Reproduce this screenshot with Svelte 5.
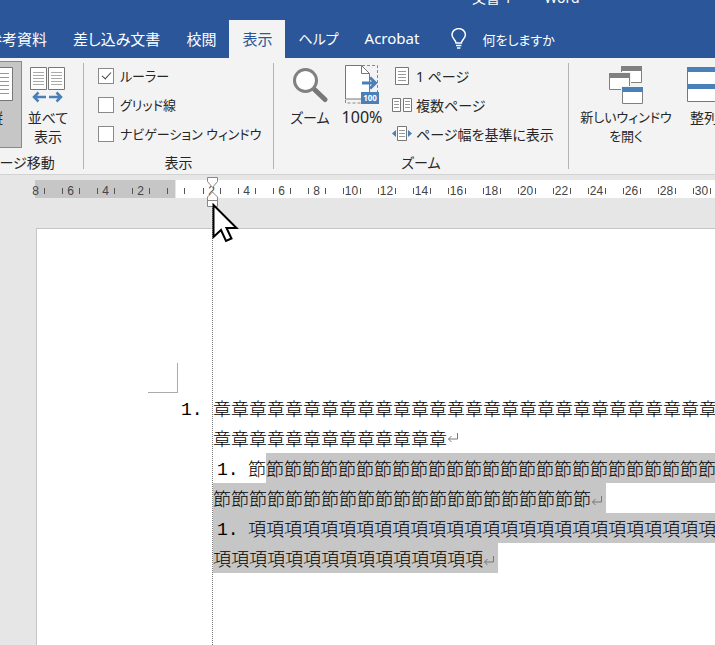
<script>
  const tabs = ['参考資料', '差し込み文書', '校閲', '表示', 'ヘルプ', 'Acrobat'];
  let current = '表示';

  let options = [
    { label: 'ルーラー', checked: true },
    { label: 'グリッド線', checked: false },
    { label: 'ナビゲーション ウィンドウ', checked: false }
  ];

  const before = [8, 6, 4, 2];
  const after = Array.from({ length: 15 }, (_, i) => (i + 1) * 2);
</script>

{#snippet mark()}
  <svg class="mark" width="12" height="12" viewBox="0 0 12 12">
    <path d="M10.500 1v6H1.500M4.500 4l-3 3 3 3" fill="none" stroke="#777" />
  </svg>
{/snippet}

<div class="app">
  <header>
    <div class="title"><span>文書 1</span><span>-</span><span>Word</span></div>
    <nav>
      {#each tabs as tab}
        <button class="tab" class:kana={tab === 'ヘルプ'} class:active={tab === current} on:click={() => (current = tab)}>{tab}</button>
      {/each}
      <button class="tell">
        <svg width="18" height="22" viewBox="0 0 18 22" fill="none" stroke="#fff" stroke-width="1.5">
          <path d="M6 15c0-3-4-4.200-4-8.200a6.700 6.200 0 0 1 13.400 0c0 4-4 5.200-4 8.200z" />
          <path d="M6 17.500h5.400M7 20h3.400" />
        </svg>
        何をしますか
      </button>
    </nav>
  </header>

  <div class="ribbon">
    <section class="group move">
      <div class="tools">
        <button class="big pressed">
          <svg width="34" height="40" viewBox="0 0 34 40">
            <path d="M.5 2.500h33v33H.5z" fill="#fff" stroke="#777" />
            <path d="M4 8.500h26M4 12.500h26M4 16.500h26M4 20.500h26M4 24.500h26M4 28.500h26" stroke="#999" />
          </svg>
          <span>縦</span>
        </button>
        <button class="big side">
          <svg width="36" height="40" viewBox="0 0 36 40">
            <path d="M.5 2.500h16v22H.5zM18.500 2.500h16v22h-16z" fill="#fff" stroke="#777" />
            <path d="M3 7.500h11M3 10.500h11M3 13.500h11M3 16.500h11M3 19.500h11M21 7.500h11M21 10.500h11M21 13.500h11M21 16.500h11M21 19.500h11" stroke="#aaa" />
            <path d="M16 32H4M8.500 27.500L4 32l4.500 4.500M19 32h12M26.500 27.500L31 32l-4.500 4.500" fill="none" stroke="#4a80b8" stroke-width="2.500" />
          </svg>
          <span>並べて<br />表示</span>
        </button>
      </div>
      <h2>ページ移動</h2>
    </section>

    <section class="group show">
      <div class="tools rows">
        {#each options as option}
          <label><input type="checkbox" bind:checked={option.checked} />{option.label}</label>
        {/each}
      </div>
      <h2>表示</h2>
    </section>

    <section class="group zoom">
      <div class="tools">
        <button class="big">
          <svg width="36" height="40" viewBox="0 0 36 40">
            <path d="M22.500 24.500L33 34.500" stroke="#777" stroke-width="5" stroke-linecap="round" />
            <circle cx="13.500" cy="15.500" r="11" fill="#fff" stroke="#808080" stroke-width="3" />
          </svg>
          <span>ズーム</span>
        </button>
        <button class="big percent">
          <svg width="34" height="40" viewBox="0 0 34 40">
            <path d="M17 .5h15.500v37.500H.5V34" fill="none" stroke="#888" stroke-dasharray="3 2" />
            <path d="M.5.5h16l8 8v25.500H.5z" fill="#fff" stroke="#777" />
            <path d="M16.500.5v8h8" fill="none" stroke="#777" />
            <path d="M17 18h13M25 12.500l5.500 5.500-5.500 5.500" fill="none" stroke="#4a80b8" stroke-width="3" />
            <path d="M16 27h18v12H16z" fill="#4a80b8" />
            <text x="25" y="36" text-anchor="middle" fill="#fff">100</text>
          </svg>
          <span>100%</span>
        </button>
        <div class="rows">
          <button class="small">
            <svg width="20" height="20" viewBox="0 0 20 20">
              <path d="M3.500 1.500h13v17h-13z" fill="#fff" stroke="#777" />
              <path d="M6 5.500h8M6 8.500h8M6 11.500h8M6 14.500h8" stroke="#999" />
            </svg>
            1 ページ
          </button>
          <button class="small">
            <svg width="20" height="20" viewBox="0 0 20 20">
              <path d="M.5 3.500h8v13h-8zM11.500 3.500h8v13h-8z" fill="#fff" stroke="#777" />
              <path d="M2 6.500h5M2 9.500h5M2 12.500h5M13 6.500h5M13 9.500h5M13 12.500h5" stroke="#999" />
            </svg>
            複数ページ
          </button>
          <button class="small">
            <svg width="20" height="20" viewBox="0 0 20 20">
              <path d="M5.500 2.500h9v14h-9z" fill="#fff" stroke="#777" />
              <path d="M7 6.500h6M7 9.500h6M7 12.500h6" stroke="#999" />
              <path d="M4 6v7L0 9.500zM16 6v7l4-3.500z" fill="#4a80b8" />
            </svg>
            ページ幅を基準に表示
          </button>
        </div>
      </div>
      <h2>ズーム</h2>
    </section>

    <section class="group window">
      <div class="tools">
        <button class="big wide">
          <svg width="36" height="40" viewBox="0 0 36 40">
            <path d="M13.500 1.500h20v16h-20z" fill="#fff" stroke="#808080" />
            <path d="M13 1h21v5H13z" fill="#808080" />
            <path d="M0 7h23v18H0z" fill="#f3f3f3" />
            <path d="M1.500 8.500h20v16h-20z" fill="#fff" stroke="#808080" />
            <path d="M1 8h21v5H1z" fill="#808080" />
            <path d="M13 21h23v18H13z" fill="#f3f3f3" />
            <path d="M14.500 22.500h20v16h-20z" fill="#fff" stroke="#808080" />
            <path d="M14 22h21v5H14z" fill="#4a80b8" />
          </svg>
          <span>新しいウィンドウ<br />を開く</span>
        </button>
        <button class="big">
          <svg width="34" height="40" viewBox="0 0 34 40">
            <path d="M.5 2.500h33v34H.5z" fill="#fff" stroke="#777" />
            <path d="M0 2h34v5H0zM0 19h34v5H0z" fill="#4a80b8" />
          </svg>
          <span>整列</span>
        </button>
      </div>
    </section>
  </div>

  <main>
    <div class="ruler">
      <div class="margin">
        {#each before as n}
          <div class="unit"><span>{n}</span></div>
        {/each}
        <div class="half left"></div>
      </div>
      <div class="body">
        <div class="half right"></div>
        {#each after as n}
          <div class="unit"><span>{n}</span></div>
        {/each}
      </div>
    </div>

    <article>
      <div class="corner"></div>
      <div class="text">
        <p><b class="outer">1.</b>{'章'.repeat(32)}</p>
        <p>{'章'.repeat(13)}{@render mark()}</p>
        <p><b>1.</b>節<span class="selected fill">{'節'.repeat(29)}</span></p>
        <p><span class="selected">{'節'.repeat(21)}{@render mark()}</span></p>
        <p class="selected"><b>1.</b>{'項'.repeat(30)}</p>
        <p><span class="selected">{'項'.repeat(15)}{@render mark()}</span></p>
      </div>
    </article>

    <!-- indent marker being dragged, with its guide line -->
    <div class="guide"></div>
    <svg class="indent" width="14" height="31" viewBox="0 0 14 31">
      <path d="M1.500.5h10v4l-5 6-5-6z" fill="#fff" stroke="#888" />
      <path d="M6.500 15l5 5v9.500h-10V20z" fill="#fff" stroke="#888" />
      <path d="M1.500 23.500h10" stroke="#888" />
    </svg>
    <svg class="pointer" width="28" height="40" viewBox="0 0 28 40">
      <path d="M1.500 2v32l7.500-7 5 11 5.500-2.500-5-10.500h10z" fill="#fff" stroke="#000" stroke-width="2" />
    </svg>
  </main>
</div>

<style>
  :global(body) {
    margin: 0;
  }

  .app {
    display: flex;
    flex-direction: column;
    min-height: 100vh;
    overflow: hidden;
    font-family: "Noto Sans", "Noto Sans CJK JP", sans-serif;
    font-size: 14px;
    font-feature-settings: "palt";
    color: #262626;
    background: #e6e6e6;
  }

  button {
    font: inherit;
    font-feature-settings: inherit;
    color: inherit;
    background: none;
    border: none;
    padding: 0;
    white-space: nowrap;
  }

  header {
    background: #2b579a;
    color: #fff;
  }

  .title {
    display: flex;
    gap: 14px;
    height: 20px;
    padding-left: 472px;
    line-height: 20px;
    margin-top: -12px;
    margin-bottom: 12px;
  }

  nav {
    display: flex;
    height: 38px;
    margin-left: -26px;
    font-size: 15px;
  }

  .tab {
    padding: 0 13px 2px;
  }

  .tab.kana {
    font-size: 14px;
  }

  .tab.active {
    background: #f3f3f3;
    color: #2b579a;
  }

  .tell {
    display: flex;
    align-items: center;
    gap: 14px;
    padding-left: 18px;
    font-size: 13px;
  }

  .ribbon {
    display: flex;
    padding: 5px 0;
    background: #f3f3f3;
    border-bottom: 1px solid #d2d2d2;
  }

  .group {
    flex: none;
    box-sizing: border-box;
    height: 106px;
    border-right: 1px solid #b4b4b4;
  }

  .move {
    width: 127px;
    margin-left: -43px;
  }

  .show {
    width: 190px;
  }

  .zoom {
    width: 295px;
  }

  .window {
    border: none;
  }

  .tools {
    display: flex;
    height: 87px;
    margin-top: -2px;
  }

  .move .tools {
    padding-left: 13px;
    gap: 4px;
  }

  .zoom .tools {
    padding-left: 10px;
  }

  .window .tools {
    padding-left: 9px;
    gap: 4px;
  }

  h2 {
    margin: 9px 0 0;
    font-size: 14px;
    font-weight: normal;
    line-height: 12px;
    text-align: center;
  }

  .big {
    display: flex;
    flex-direction: column;
    align-items: center;
    gap: 3px;
    box-sizing: border-box;
    width: 52px;
    padding-top: 3px;
    border: 1px solid transparent;
    line-height: 19px;
  }

  .big.pressed {
    background: #c6c6c6;
    border-color: #8a8a8a;
  }

  .big.side {
    width: 44px;
  }

  .big.wide {
    width: 96px;
    font-size: 13px;
  }

  .big.percent {
    font-size: 16px;
  }

  .big svg {
    flex: none;
  }

  .big text {
    font-size: 8px;
    font-weight: bold;
  }

  .rows {
    flex-direction: column;
  }

  .show .rows {
    padding-left: 14px;
  }

  .rows label,
  .small {
    display: flex;
    align-items: center;
    height: 29px;
    white-space: nowrap;
  }

  .rows label {
    gap: 6px;
    font-size: 13px;
  }

  .zoom .rows {
    padding-left: 4px;
  }

  .small {
    gap: 4px;
  }

  input {
    appearance: none;
    display: grid;
    place-items: center;
    box-sizing: border-box;
    width: 16px;
    height: 16px;
    margin: 0;
    border: 1px solid #8a8a8a;
    background: #fff;
  }

  input:checked::before {
    content: '';
    width: 4px;
    height: 8px;
    margin-bottom: 3px;
    border: solid #444;
    border-width: 0 1px 1px 0;
    transform: rotate(42deg);
  }

  main {
    position: relative;
    flex: 1;
    display: flex;
    flex-direction: column;
    overflow: hidden;
  }

  .ruler {
    display: flex;
    height: 18px;
    margin: 5px 0 30px 35px;
    font-family: "Liberation Sans", sans-serif;
    font-size: 12px;
    color: #444;
  }

  .margin,
  .body {
    display: flex;
    align-items: center;
  }

  .margin {
    flex: none;
    justify-content: flex-end;
    width: 140px;
    margin-right: 1px;
    background: #c6c6c6;
  }

  .body {
    flex: 1;
    min-width: 0;
    overflow: hidden;
    background: #fff;
  }

  .unit {
    flex: none;
    width: 35px;
  }

  .unit span {
    display: block;
    width: 16px;
    height: 6px;
    margin: 4px auto 0;
    line-height: 6px;
    text-align: center;
    border: solid #555;
    border-width: 0 1px;
  }

  .margin .unit:first-child span {
    border-left-color: transparent;
  }

  .half {
    flex: none;
    box-sizing: border-box;
    width: 9px;
    height: 6px;
    margin-top: 4px;
  }

  .half.left {
    margin-left: 9px;
    border-left: 1px solid #555;
    width: 8px;
  }

  .half.right {
    margin-right: 9px;
    border-right: 1px solid #555;
  }

  article {
    flex: 1;
    margin-left: 36px;
    background: #fff;
    border: solid #c6c6c6;
    border-width: 1px 0 0 1px;
  }

  .corner {
    width: 29px;
    height: 29px;
    margin: 134px 0 0 111px;
    border: solid #aaa;
    border-width: 0 1px 1px 0;
  }

  .text {
    padding-left: 176px;
    font-family: "Noto Sans CJK JP", sans-serif;
    font-size: 18px;
    font-weight: 300;
    font-feature-settings: normal;
    color: #000;
  }

  p {
    display: flex;
    height: 30px;
    margin: 0;
    line-height: 30px;
    white-space: nowrap;
  }

  b {
    flex: none;
    box-sizing: border-box;
    width: 35px;
    padding-left: 4px;
    font-family: "Liberation Mono", monospace;
    font-weight: normal;
    line-height: 34px;
  }

  b.outer {
    width: 36px;
    margin-left: -36px;
  }

  .selected {
    background: #c6c6c6;
  }

  .fill {
    flex: 1;
  }

  span.selected {
    padding-right: 3px;
  }

  .mark {
    align-self: center;
    vertical-align: middle;
  }

  .guide {
    position: absolute;
    top: 31px;
    bottom: 0;
    left: 212px;
    border-left: 1px dotted #777;
  }

  .indent {
    position: absolute;
    top: 2px;
    left: 206px;
  }

  .pointer {
    position: absolute;
    top: 28px;
    left: 212px;
  }
</style>
